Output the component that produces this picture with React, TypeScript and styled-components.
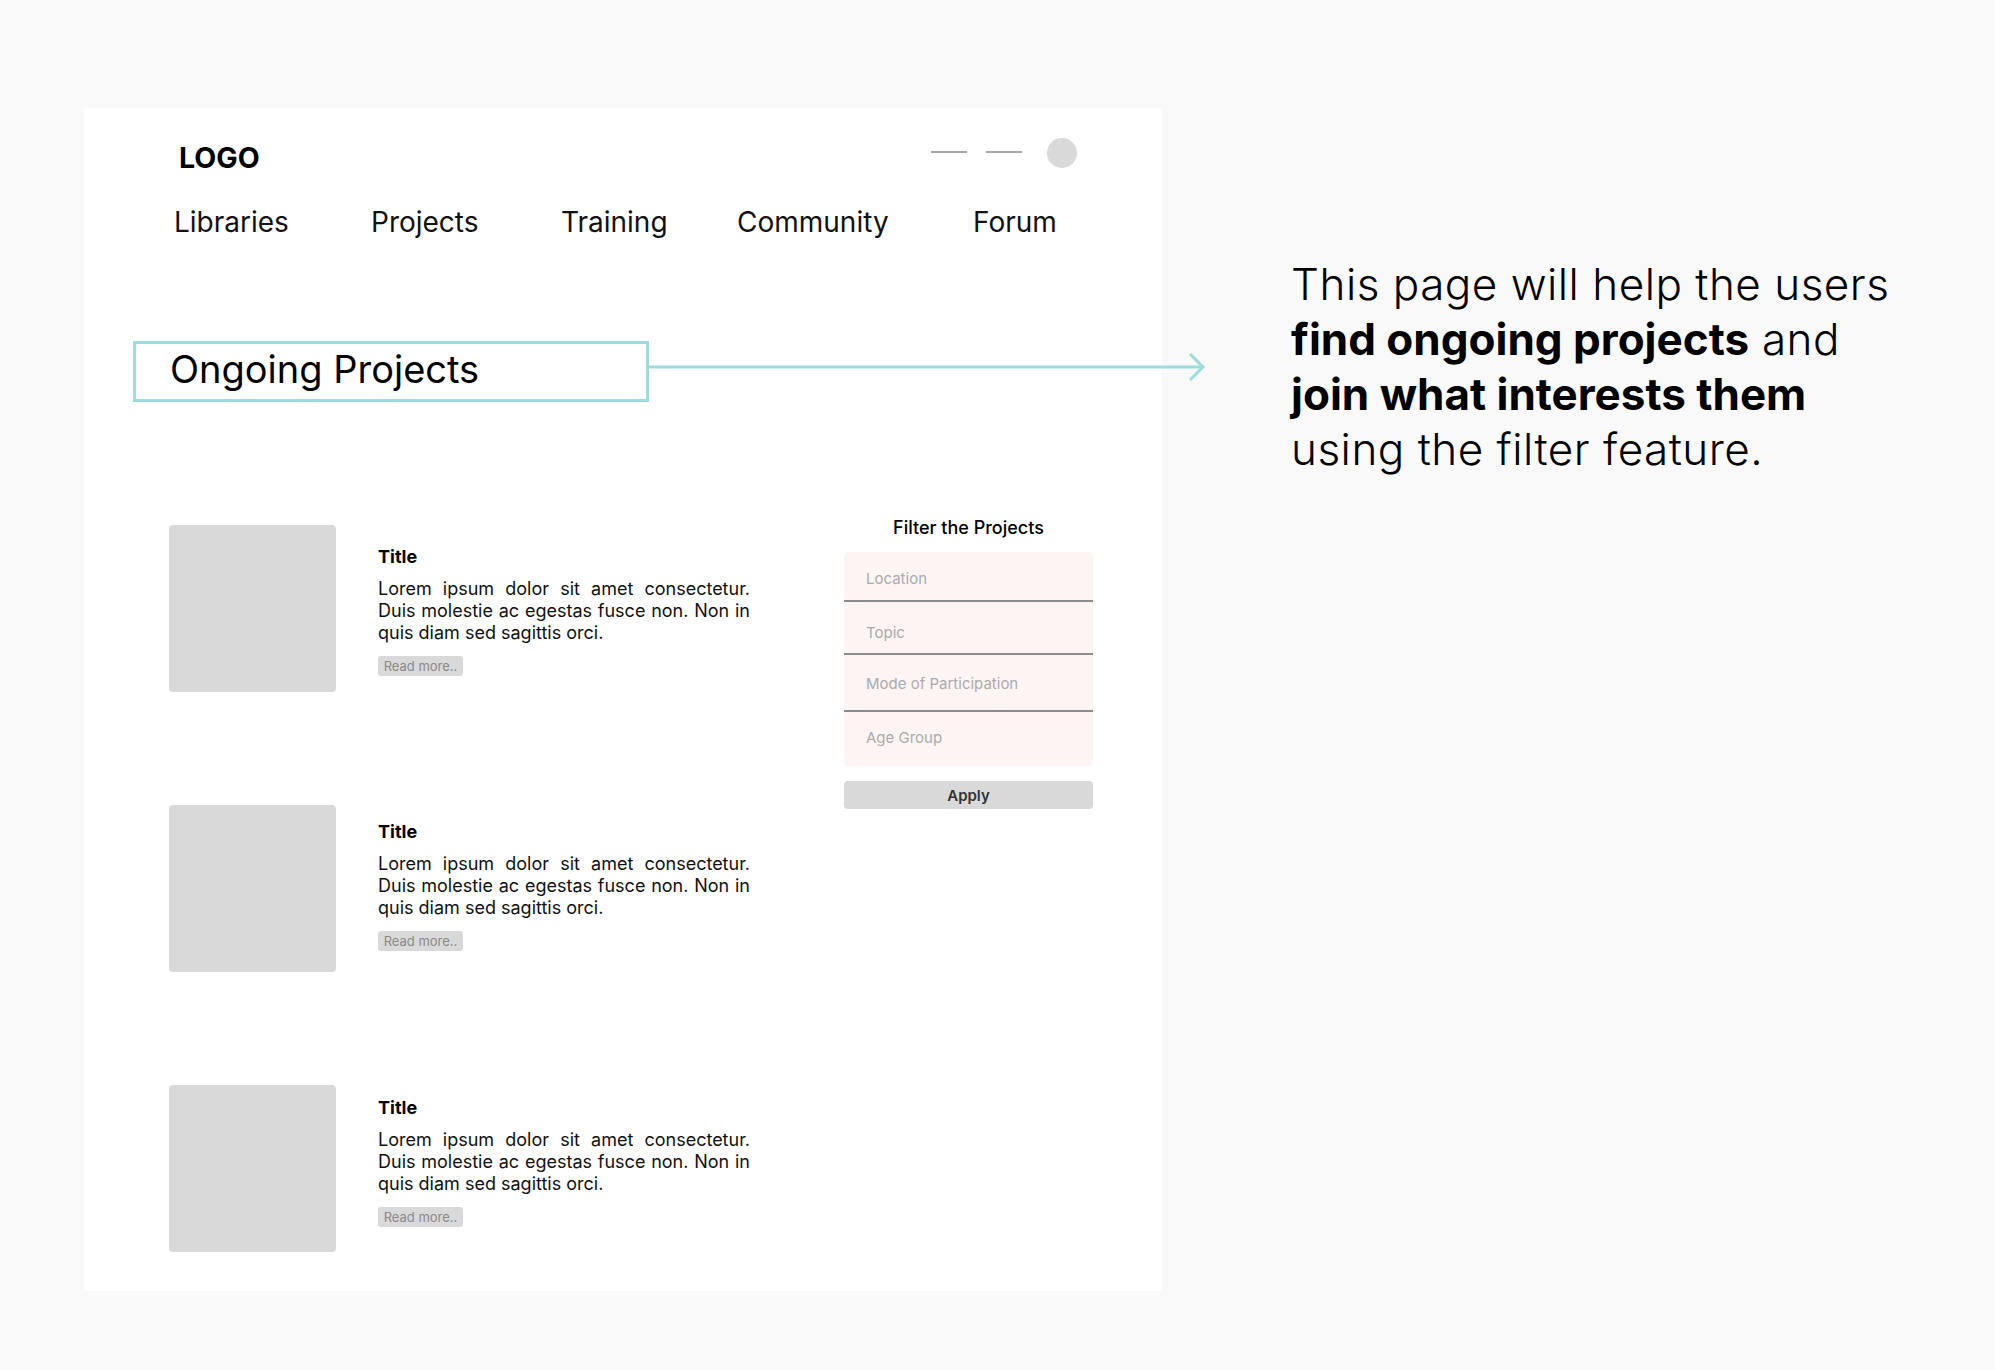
import React from "react";
import styled, { createGlobalStyle } from "styled-components";

const Global = createGlobalStyle`
  html, body { margin: 0; padding: 0; background: #f9f9f9; }
  body { font-family: Inter, "Noto Sans", "Liberation Sans", sans-serif; color: #000; }
  * { box-sizing: border-box; }
`;

const Page = styled.div`
  display: flex;
  align-items: flex-start;
  padding: 108px 0 0 84px;
  min-height: 1370px;
`;

const Panel = styled.div`
  width: 1078px;
  height: 1183px;
  flex-shrink: 0;
  background: #ffffff;
  display: flex;
  flex-direction: column;
`;

const TopBar = styled.div`
  display: flex;
  justify-content: space-between;
  align-items: flex-start;
  padding: 30px 85px 0 95px;
`;

const Logo = styled.div`
  font-size: 28.5px;
  font-weight: 700;
  line-height: 34px;
  margin-top: 3px;
`;

const Controls = styled.div`
  display: flex;
  align-items: center;
  gap: 19px;
`;

const Dash = styled.span`
  display: block;
  width: 36px;
  height: 2px;
  background: #a8a8a8;
  margin-top: -2px;
`;

const Avatar = styled.span`
  display: block;
  width: 30px;
  height: 30px;
  border-radius: 50%;
  background: #d9d9d9;
  margin-left: 6px;
`;

const Nav = styled.nav`
  display: grid;
  grid-template-columns: 197px 190px 176px 236px auto;
  padding-left: 90px;
  margin-top: 30px;
`;

const NavItem = styled.a`
  font-size: 28px;
  line-height: 34px;
  color: #111;
  text-decoration: none;
`;

const HeadingRow = styled.div`
  display: flex;
  align-items: flex-start;
  margin: 102px 0 0 49px;
`;

const HeadingBox = styled.div`
  flex-shrink: 0;
  width: 516px;
  height: 61px;
  border: 3px solid #9ddcdc;
  display: flex;
  align-items: center;
  padding: 0 0 6px 34px;
  font-size: 38px;
  color: #000;
`;

const Connector = styled.svg`
  display: block;
  flex-shrink: 0;
  margin-top: 11px;
  overflow: visible;
`;

const Content = styled.div`
  display: flex;
  align-items: flex-start;
  justify-content: space-between;
  padding: 0 69px 0 85px;
  margin-top: 114px;
`;

const CardList = styled.div`
  display: flex;
  flex-direction: column;
  gap: 113px;
  margin-top: 9px;
`;

const Card = styled.div`
  display: flex;
  gap: 42px;
`;

const Thumb = styled.div`
  width: 167px;
  height: 167px;
  border-radius: 4px;
  background: #d9d9d9;
  flex-shrink: 0;
`;

const CardBody = styled.div<{ $offset: number }>`
  width: 372px;
  padding-top: ${(p) => p.$offset}px;
  display: flex;
  flex-direction: column;
  align-items: flex-start;
`;

const CardTitle = styled.div`
  font-size: 18px;
  font-weight: 700;
  line-height: 21px;
`;

const CardText = styled.p`
  margin: 11px 0 0;
  font-size: 18px;
  line-height: 22px;
  text-align: justify;
  color: #111;
`;

const ReadMore = styled.button`
  margin-top: 12px;
  width: 85px;
  height: 20px;
  border: none;
  border-radius: 3px;
  background: #d9d9d9;
  color: #8a8a8a;
  font-family: inherit;
  font-size: 13px;
  padding: 0;
  cursor: pointer;
`;

const FilterPanel = styled.aside`
  width: 249px;
  display: flex;
  flex-direction: column;
`;

const FilterTitle = styled.div`
  text-align: center;
  font-size: 18px;
  font-weight: 500;
  line-height: 21px;
  margin-top: 1px;
`;

const FilterBox = styled.div`
  margin-top: 14px;
  background: #fdf4f4;
  border-radius: 5px;
  display: flex;
  flex-direction: column;
`;

const FilterField = styled.div<{ $h: number; $pt: number; $last?: boolean }>`
  padding: ${(p) => p.$pt}px 0 0 22px;
  height: ${(p) => p.$h - p.$pt}px;
  font-size: 15px;
  line-height: 18px;
  color: #ababab;
  border-bottom: ${(p) => (p.$last ? "none" : "2px solid #8c8c8c")};
  box-sizing: content-box;
`;

const ApplyButton = styled.button`
  margin-top: 15px;
  height: 28px;
  border: none;
  border-radius: 4px;
  background: #d9d9d9;
  color: #333;
  font-family: inherit;
  font-size: 15px;
  font-weight: 600;
  cursor: pointer;
`;

const Note = styled.p`
  margin: 149px 0 0 129px;
  font-size: 44px;
  line-height: 55px;
  font-weight: 300;
  letter-spacing: 0.5px;
  color: #000;
  white-space: nowrap;
  b { font-weight: 700; letter-spacing: 0; }
`;

const lorem =
  "Lorem ipsum dolor sit amet consectetur. Duis molestie ac egestas fusce non. Non in quis diam sed sagittis orci.";

const navItems = ["Libraries", "Projects", "Training", "Community", "Forum"];

const cardOffsets = [21, 16, 12];

const filters: { label: string; h: number; pt: number }[] = [
  { label: "Location", h: 48, pt: 18 },
  { label: "Topic", h: 51, pt: 22 },
  { label: "Mode of Participation", h: 55, pt: 20 },
  { label: "Age Group", h: 54, pt: 17 },
];

export default function App() {
  return (
    <>
      <Global />
      <Page>
        <Panel>
          <TopBar>
            <Logo>LOGO</Logo>
            <Controls>
              <Dash />
              <Dash />
              <Avatar />
            </Controls>
          </TopBar>
          <Nav>
            {navItems.map((n) => (
              <NavItem key={n} href="#">
                {n}
              </NavItem>
            ))}
          </Nav>
          <HeadingRow>
            <HeadingBox>Ongoing Projects</HeadingBox>
            <Connector width="556" height="30" viewBox="0 0 556 30">
              <line x1="0" y1="15" x2="554" y2="15" stroke="#9ddcdc" strokeWidth="3" />
              <polyline points="541,2 554,15 541,28" fill="none" stroke="#9ddcdc" strokeWidth="3" />
            </Connector>
          </HeadingRow>
          <Content>
            <CardList>
              {cardOffsets.map((off, i) => (
                <Card key={i}>
                  <Thumb />
                  <CardBody $offset={off}>
                    <CardTitle>Title</CardTitle>
                    <CardText>{lorem}</CardText>
                    <ReadMore>Read more..</ReadMore>
                  </CardBody>
                </Card>
              ))}
            </CardList>
            <FilterPanel>
              <FilterTitle>Filter the Projects</FilterTitle>
              <FilterBox>
                {filters.map((f, i) => (
                  <FilterField key={f.label} $h={f.h} $pt={f.pt} $last={i === filters.length - 1}>
                    {f.label}
                  </FilterField>
                ))}
              </FilterBox>
              <ApplyButton>Apply</ApplyButton>
            </FilterPanel>
          </Content>
        </Panel>
        <Note>
          This page will help the users
          <br />
          <b>find ongoing projects</b> and
          <br />
          <b>join what interests them</b>
          <br />
          using the filter feature.
        </Note>
      </Page>
    </>
  );
}
